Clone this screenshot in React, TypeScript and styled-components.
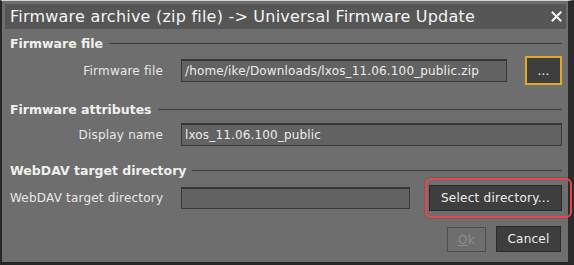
import React from "react";
import styled, { createGlobalStyle } from "styled-components";

const Global = createGlobalStyle`
  html, body { margin: 0; padding: 0; background: #6e6e6e; }
  body { font-family: "DejaVu Sans", Verdana, sans-serif; }
`;

const Window = styled.div`
  box-sizing: border-box;
  width: 574px;
  height: 265px;
  background: #6e6e6e;
  border-top: 1px solid #d4d4d4;
  border-left: 2px solid #262626;
  border-right: 6px solid #2b2b2b;
  border-bottom: 3px solid #262626;
  display: flex;
  flex-direction: column;
  position: relative;
`;

const TitleBar = styled.div`
  margin: 3px 2px 0 3px;
  height: 25px;
  background: #565656;
  display: flex;
  align-items: center;
  justify-content: space-between;
  padding: 0 4px 0 5px;
  color: #f4f4f4;
  font-size: 16px;
  letter-spacing: 0.22px;
`;

const Close = styled.span`
  display: flex;
  align-items: center;
  justify-content: center;
  width: 12px;
  height: 14px;
`;

const Body = styled.div`
  display: flex;
  flex-direction: column;
  padding: 6px 6px 0 8px;
`;

const SectionHeader = styled.div<{ $top: number }>`
  display: flex;
  align-items: center;
  gap: 6px;
  margin-top: ${(p) => p.$top}px;
  height: 17px;
  color: #f0f0f0;
  font-weight: bold;
  font-size: 12.5px;
  &::after {
    content: "";
    flex: 1;
    height: 1px;
    background: #3c3c3c;
  }
`;

const Row = styled.div<{ $top: number; $h: number }>`
  display: grid;
  grid-template-columns: 153px 1fr auto;
  column-gap: 18px;
  align-items: center;
  margin-top: ${(p) => p.$top}px;
  height: ${(p) => p.$h}px;
`;

const Label = styled.div`
  text-align: right;
  color: #e8e8e8;
  font-size: 12px;
  letter-spacing: 0.2px;
  white-space: nowrap;
`;

const Input = styled.div<{ $h: number }>`
  box-sizing: border-box;
  height: ${(p) => p.$h}px;
  background: #626262;
  border: 1px solid #3a3a3a;
  border-top: 2px solid #363636;
  color: #ececec;
  font-size: 12px;
  letter-spacing: 0.15px;
  display: flex;
  align-items: center;
  padding: 0 3px;
  white-space: nowrap;
  overflow: hidden;
`;

const Button = styled.div<{ $w: number; $h: number; $focus?: boolean; $disabled?: boolean }>`
  box-sizing: border-box;
  width: ${(p) => p.$w}px;
  height: ${(p) => p.$h}px;
  background: ${(p) => (p.$disabled ? "#6e6e6e" : "#3e3e3e")};
  border: ${(p) => (p.$focus ? "2px solid #e5a823" : p.$disabled ? "1px solid #4e4e4e" : "1px solid #2a2a2a")};
  color: ${(p) => (p.$disabled ? "#8c8c8c" : "#efefef")};
  font-size: 12px;
  letter-spacing: 0.25px;
  display: flex;
  align-items: center;
  justify-content: center;
  position: relative;
`;

const Highlight = styled.div`
  position: absolute;
  left: -5px;
  right: -11px;
  top: -8px;
  bottom: -8px;
  border: 2px solid #ef434b;
  border-radius: 6px;
  box-shadow: 0 0 2px rgba(0, 0, 0, 0.35);
  pointer-events: none;
`;

const ButtonCol = styled.div<{ $shift: number }>`
  display: flex;
  margin-left: ${(p) => p.$shift}px;
`;

const Footer = styled.div`
  display: flex;
  justify-content: flex-end;
  gap: 10px;
  margin-top: 15px;
  padding-right: 1px;
  align-items: flex-end;
`;

const U = styled.span`
  text-decoration: underline;
`;

export default function App() {
  return (
    <>
      <Global />
      <Window>
        <TitleBar>
          <span>Firmware archive (zip file) -&gt; Universal Firmware Update</span>
          <Close>
            <svg width="11" height="11" viewBox="0 0 11 11">
              <path d="M1.5 1.5 L9.5 9.5 M9.5 1.5 L1.5 9.5" stroke="#f4f4f4" strokeWidth="2" strokeLinecap="square" />
            </svg>
          </Close>
        </TitleBar>
        <Body>
          <SectionHeader $top={0}>Firmware file</SectionHeader>
          <Row $top={4} $h={29}>
            <Label>Firmware file</Label>
            <Input $h={23}>/home/ike/Downloads/lxos_11.06.100_public.zip</Input>
            <ButtonCol $shift={0}>
              <Button $w={37} $h={29} $focus>...</Button>
            </ButtonCol>
          </Row>
          <SectionHeader $top={16}>Firmware attributes</SectionHeader>
          <Row $top={5} $h={23}>
            <Label>Display name</Label>
            <Input $h={23} style={{ gridColumn: "2 / 4" }}>lxos_11.06.100_public</Input>
          </Row>
          <SectionHeader $top={16}>WebDAV target directory</SectionHeader>
          <Row $top={6} $h={26}>
            <Label>WebDAV target directory</Label>
            <Input $h={22}>&nbsp;</Input>
            <ButtonCol $shift={1}>
              <Button $w={133} $h={26}>
                Select directory...
                <Highlight />
              </Button>
            </ButtonCol>
          </Row>
          <Footer>
            <Button $w={39} $h={25} $disabled>
              <U>O</U>k
            </Button>
            <Button $w={65} $h={26}>Cancel</Button>
          </Footer>
        </Body>
      </Window>
    </>
  );
}
